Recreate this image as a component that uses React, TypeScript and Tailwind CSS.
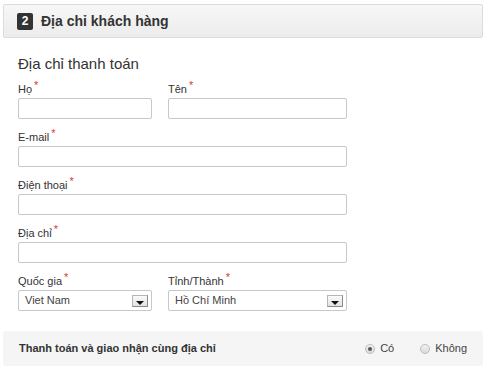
const Star = () => <span className="text-[#e0343b] text-[11px] relative -top-[4px] ml-[2px]">*</span>;

const Label = ({ text, className = "" }: { text: string; className?: string }) => (
  <div className={`h-[14px] text-[11px] leading-[14px] text-[#333] mb-[2px] ${className}`}>
    {text}
    <Star />
  </div>
);

const Input = () => <div className="h-[21px] border border-[#c8c8c8] rounded-[2px] bg-white" />;

const SelectBox = ({ value }: { value: string }) => (
  <div className="h-[21px] border border-[#c8c8c8] rounded-[2px] bg-white flex items-center justify-between pl-[6px] pr-[3px]">
    <span className="text-[11px] text-[#444]">{value}</span>
    <span className="w-[16px] h-[12px] border border-[#8a8a8a] border-l-[#b5b5b5] border-t-[#b5b5b5] bg-gradient-to-b from-[#fbfbfb] to-[#e2e2e2] flex items-end justify-center">
      <svg width="8" height="5" viewBox="0 0 8 5">
        <path d="M0 0 L8 0 L4 4 Z" fill="#111" />
      </svg>
    </span>
  </div>
);

const Radio = ({ checked, label }: { checked?: boolean; label: string }) => (
  <label className="flex items-center gap-[5px] text-[11px] text-[#444]">
    <span className="w-[10px] h-[10px] rounded-full border border-[#bdbdbd] bg-gradient-to-b from-[#f2f2f2] to-[#dadada] flex items-center justify-center">
      {checked && <span className="w-[4px] h-[4px] rounded-full bg-[#555]" />}
    </span>
    {label}
  </label>
);

export default function App() {
  return (
    <div className="w-[493px] h-[368px] bg-white pt-[4px] px-[3px] font-['Liberation_Sans',Arial,sans-serif]">
      <div className="w-[480px] h-[34px] border border-[#dcdcdc] rounded-[2px] bg-gradient-to-b from-[#f7f7f7] to-[#ececec] flex items-center pl-[13px] gap-[8px]">
        <span className="w-[16px] h-[17px] bg-[#333] rounded-[2px] text-white text-[12px] font-bold flex items-center justify-center">2</span>
        <span className="text-[14px] font-bold text-[#333]">Địa chỉ khách hàng</span>
      </div>

      <div className="pl-[15px] w-[344px] pt-[17px]">
        <div className="text-[15px] leading-[18px] text-[#333] mb-[9px]">Địa chỉ thanh toán</div>

        <div className="flex gap-[16px]">
          <div className="w-[134px]">
            <Label text="Họ" />
            <Input />
          </div>
          <div className="flex-1">
            <Label text="Tên" />
            <Input />
          </div>
        </div>

        <Label text="E-mail" className="mt-[11px]" />
        <Input />

        <Label text="Điện thoại" className="mt-[11px]" />
        <Input />

        <Label text="Địa chỉ" className="mt-[11px]" />
        <Input />

        <div className="flex gap-[16px] mt-[11px]">
          <div className="w-[134px]">
            <Label text="Quốc gia" />
            <SelectBox value="Viet Nam" />
          </div>
          <div className="flex-1">
            <Label text="Tỉnh/Thành" />
            <SelectBox value="Hồ Chí Minh" />
          </div>
        </div>
      </div>

      <div className="mt-[20px] w-[480px] h-[35px] bg-[#f5f5f5] rounded-[3px] flex items-center justify-between pl-[16px] pr-[16px]">
        <span className="text-[11px] font-bold text-[#333]">Thanh toán và giao nhận cùng địa chỉ</span>
        <div className="flex items-center gap-[26px]">
          <Radio checked label="Có" />
          <Radio label="Không" />
        </div>
      </div>
    </div>
  );
}
